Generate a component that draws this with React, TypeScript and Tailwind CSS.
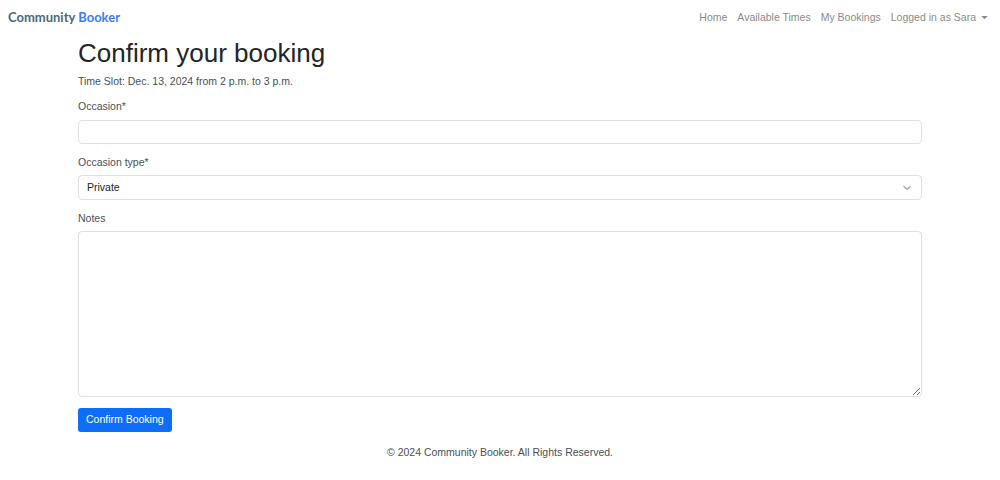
import React from 'react'

function Caret({ className }: { className?: string }) {
  return (
    <svg viewBox="0 0 10 6" className={className} fill="currentColor">
      <path d="M0 0h10L5 5z" />
    </svg>
  )
}

function Chevron({ className }: { className?: string }) {
  return (
    <svg viewBox="0 0 16 16" className={className} fill="none" stroke="#555b61" strokeWidth="2" strokeLinecap="round" strokeLinejoin="round">
      <path d="m2 5 6 6 6-6" />
    </svg>
  )
}

export default function App() {
  const fieldBox = 'w-full rounded-[4px] border border-[#dee2e6] bg-white px-[8px] text-[10.5px] text-[#212529] outline-none'

  return (
    <div className="min-h-[480px] bg-white font-['Liberation_Sans',Arial,sans-serif] text-[#212529]">
      {/* navbar */}
      <nav className="flex h-[36px] items-center justify-between pl-[8px] pr-[12px]">
        <a className="font-['Lato',sans-serif] text-[13px] font-bold text-[#4b6a78]">
          Community <span className="text-[#3b7cf6]">Booker</span>
        </a>
        <ul className="flex items-center gap-[10px] text-[10.5px] text-[#8a8a8a]">
          <li>Home</li>
          <li>Available Times</li>
          <li>My Bookings</li>
          <li className="flex items-center gap-[5px]">
            Logged in as Sara
            <Caret className="h-[4px] w-[7px]" />
          </li>
        </ul>
      </nav>

      <main className="mx-[78px]">
        <h1 className="mt-[1px] text-[26px] leading-[32px] text-[#212529]">Confirm your booking</h1>
        <p className="mt-[4px] text-[10.5px] leading-[16px] text-[#495057]">
          Time Slot: Dec. 13, 2024 from 2 p.m. to 3 p.m.
        </p>

        <form className="mt-[9px]">
          <label className="block text-[10.5px] leading-[16px] text-[#495057]">Occasion*</label>
          <input className={`${fieldBox} mt-[6px] h-[24px]`} />

          <label className="mt-[10px] block text-[10.5px] leading-[16px] text-[#495057]">Occasion type*</label>
          <div className={`${fieldBox} mt-[5px] flex h-[25px] items-center justify-between`}>
            <span>Private</span>
            <Chevron className="mr-[2px] h-[8px] w-[8px]" />
          </div>

          <label className="mt-[10px] block text-[10.5px] leading-[16px] text-[#495057]">Notes</label>
          <textarea className={`${fieldBox} mt-[5px] block h-[166px] resize-y py-[5px]`} />

          <button
            type="button"
            className="mt-[11px] h-[24px] rounded-[3px] bg-[#0d6efd] px-[8px] text-[10.5px] text-white"
          >
            Confirm Booking
          </button>
        </form>
      </main>

      <footer className="mt-[13px] text-center text-[10.5px] text-[#495057]">
        © 2024 Community Booker. All Rights Reserved.
      </footer>
    </div>
  )
}
